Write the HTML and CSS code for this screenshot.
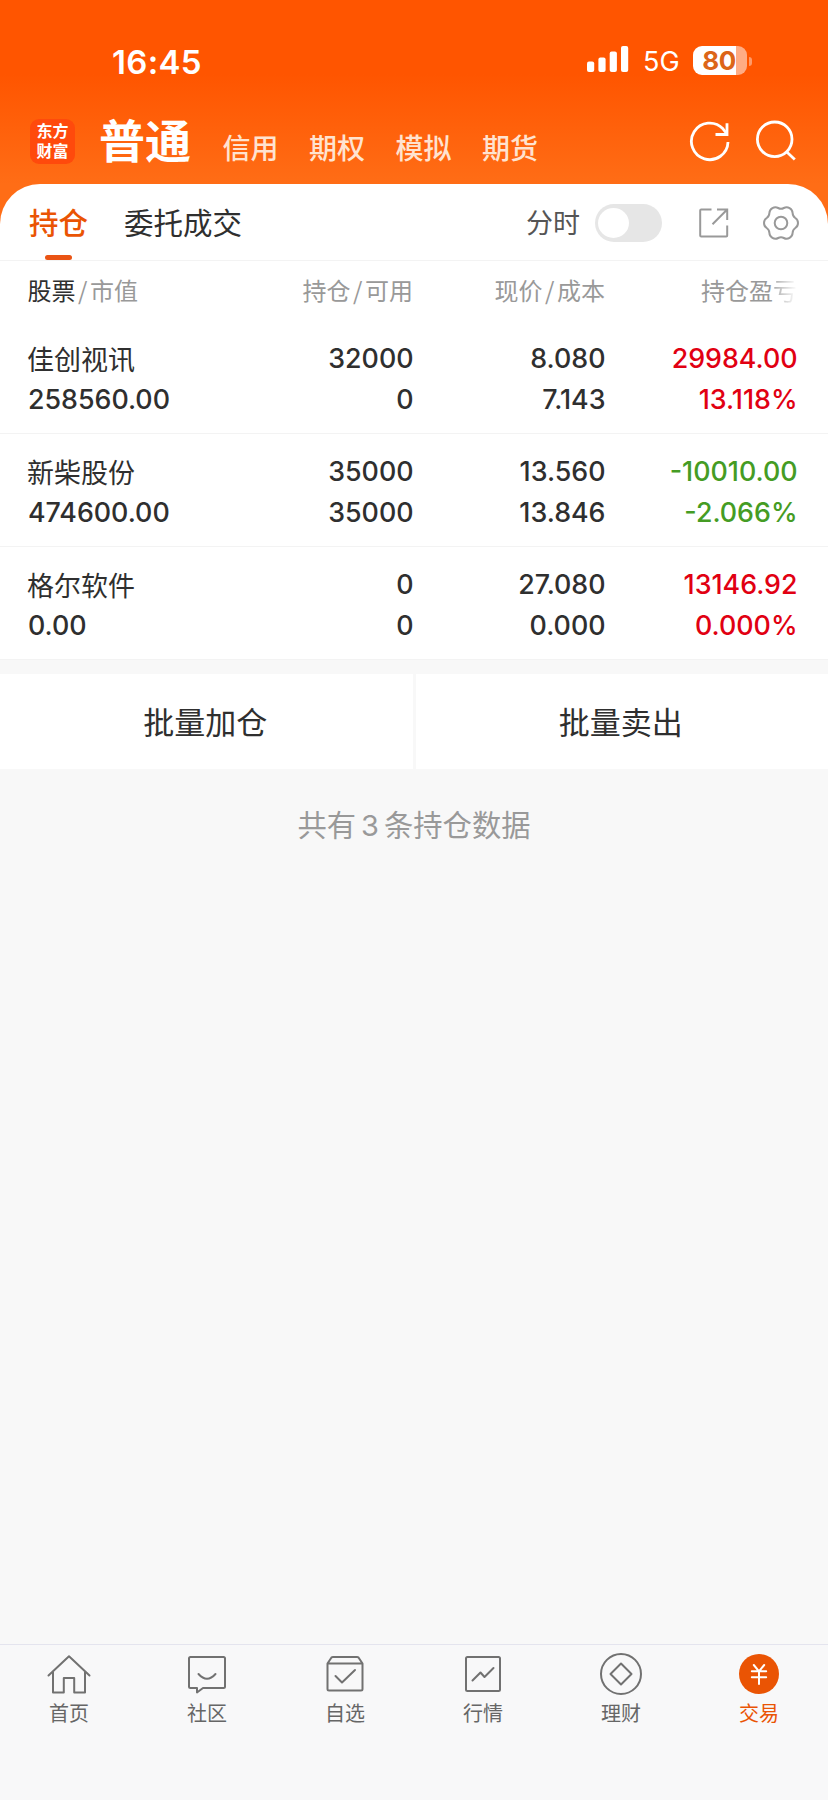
FILE: index.html
```html
<!DOCTYPE html>
<html lang="zh-CN">
<head>
<meta charset="utf-8">
<title>持仓</title>
<link rel="stylesheet" href="styles.css">
</head>
<body>
<div class="app">
  <header class="top">
    <div class="status">
      <span class="time">16:45</span>
      <svg class="signal" width="42" height="26" viewBox="0 0 42 26" fill="#fff"><rect x="0" y="15.5" width="7.2" height="10.5" rx="2"/><rect x="11.4" y="11.5" width="7.2" height="14.5" rx="2"/><rect x="22.7" y="5.5" width="7.2" height="20.5" rx="2"/><rect x="34" y="0" width="7.2" height="26" rx="2"/></svg>
      <span class="net">5G</span>
      <span class="battery"><span class="level">80</span></span><span class="nub"></span>
    </div>
    <div class="accounts">
      <div class="logo"><span>东方</span><span>财富</span></div>
      <span class="current">普通</span>
      <nav class="kinds"><a>信用</a><a>期权</a><a>模拟</a><a>期货</a></nav>
      <svg class="refresh" width="42" height="42" viewBox="0 0 42 42" fill="none" stroke="#fff" stroke-width="2.800"><path d="M40 22A18.300 18.300 0 1 1 35 8.800L39 14"/><path d="M39 3.200v11.300H27.500"/></svg>
      <svg class="search" width="42" height="42" viewBox="0 0 42 42" fill="none" stroke="#fff" stroke-width="2.800"><circle cx="20.700" cy="19.300" r="17.300"/><path d="M32 31.200l8.800 8.300"/></svg>
    </div>
  </header>
  <main class="card">
    <div class="tabs">
      <a class="tab active">持仓</a>
      <a class="tab">委托成交</a>
      <span class="minute">分时</span>
      <span class="toggle"></span>
      <svg class="export" width="30" height="30" viewBox="0 0 30 30" fill="none" stroke="#999" stroke-width="2"><path d="M12.500 1.500H2.200Q1.200 1.500 1.200 2.500v25Q1.200 28.500 2.200 28.500h25Q28.200 28.500 28.200 27.500V17.500M18 1.500h10.200V12M28.200 1.500L13.500 16.300"/></svg>
      <svg class="gear" width="36" height="36" viewBox="-18 -18 36 36" fill="none" stroke="#999" stroke-width="2"><path d="M17 0Q17 3.300 14.300 5Q11.700 6.750 11.600 10Q11.500 13.200 8.600 14.850Q5.700 16.500 2.850 15Q0 13.500-2.850 15Q-5.700 16.500-8.600 14.850Q-11.500 13.200-11.600 10Q-11.700 6.750-14.300 5Q-17 3.300-17 0Q-17-3.300-14.300-5Q-11.700-6.750-11.600-10Q-11.500-13.200-8.600-14.850Q-5.700-16.500-2.850-15Q0-13.500 2.850-15Q5.700-16.500 8.600-14.850Q11.500-13.200 11.600-10Q11.700-6.750 14.300-5Q17-3.300 17 0Z"/><circle r="6.300"/></svg>
    </div>
    <div class="grid head">
      <span><b>股票</b><i>/</i>市值</span><span>持仓<i>/</i>可用</span><span>现价<i>/</i>成本</span><span>持仓盈<em>亏</em></span>
    </div>
    <div class="grid row">
      <div><p class="name">佳创视讯</p><p>258560.00</p></div><div><p>32000</p><p>0</p></div><div><p>8.080</p><p>7.143</p></div><div class="up"><p>29984.00</p><p>13.118%</p></div>
    </div>
    <div class="grid row">
      <div><p class="name">新柴股份</p><p>474600.00</p></div><div><p>35000</p><p>35000</p></div><div><p>13.560</p><p>13.846</p></div><div class="down"><p>-10010.00</p><p>-2.066%</p></div>
    </div>
    <div class="grid row">
      <div><p class="name">格尔软件</p><p>0.00</p></div><div><p>0</p><p>0</p></div><div><p>27.080</p><p>0.000</p></div><div class="up"><p>13146.92</p><p>0.000%</p></div>
    </div>
  </main>
  <div class="batch"><a>批量加仓</a><a>批量卖出</a></div>
  <p class="summary">共有<span>3</span>条持仓数据</p>
  <nav class="bottom">
    <a><svg width="48" height="44" viewBox="0 0 48 44"><path d="M3.500 23.500L24 4.300L44.500 23.500M8 20v20.500h10.800V26h10.400v14.500H40V20"/></svg>首页</a>
    <a><svg width="48" height="44" viewBox="0 0 48 44"><path d="M7.500 5h33q1.500 0 1.500 1.500v28q0 1.500-1.500 1.500H20l-6 4.500V36H7.500Q6 36 6 34.500v-28Q6 5 7.500 5zM15.500 22q8.500 9.500 17 0"/></svg>社区</a>
    <a><svg width="48" height="44" viewBox="0 0 48 44"><path d="M6.500 11.500L10.500 5.500Q11 5 12 5h24q1 0 1.500.5l4 6v25.500q0 1.500-1.500 1.500H8q-1.500 0-1.500-1.500zM6.500 11.500h35M14.500 24l6.500 6.500L34 18"/></svg>自选</a>
    <a><svg width="48" height="44" viewBox="0 0 48 44"><rect x="7" y="5" width="34" height="34" rx="1.500"/><path d="M13.500 28.500l8-8 4 4.500 9-9"/></svg>行情</a>
    <a><svg width="48" height="44" viewBox="0 0 48 44"><circle cx="24" cy="22" r="20"/><path d="M24 11.500L34.500 22L24 32.500L13.500 22z"/></svg>理财</a>
    <a class="on"><svg width="48" height="44" viewBox="0 0 48 44"><circle class="disc" cx="24" cy="22" r="20"/><path class="yen" d="M18.800 13l5.200 6.300 5.200-6.300M24 19.300V32M16.800 19.300h14.400M16.800 25.300h14.400"/></svg>交易</a>
  </nav>
</div>
</body>
</html>
```
FILE: styles.css
```css
* { box-sizing: border-box; }
body { margin: 0; background: #f8f8f8; }
p { margin: 0; }
i, em { font-style: normal; }
.app {
  width: 828px; height: 1800px; display: flex; flex-direction: column;
  font-family: "Noto Sans CJK SC", "Noto Sans", sans-serif; color: #2f2f2f;
  background: #f8f8f8;
}
.top { height: 230px; flex: none; background: linear-gradient(#ff5500 0, #ff5500 74px, #ff6d16 184px, #ff6d16); color: #fff; }
.status { display: flex; height: 107px; padding: 0 76px 0 112px; font-family: Inter, sans-serif; }
.time { font-size: 33px; font-weight: 600; line-height: 38px; margin-top: 43px; letter-spacing: 0.3px; }
.signal { margin: 46px 14px 0 auto; }
.net { font-size: 27px; font-weight: 400; line-height: 32px; margin-top: 46px; width: 50px; }
.battery {
  width: 54px; height: 29px; margin-top: 46px; border-radius: 9px; overflow: hidden;
  background: linear-gradient(90deg, #fff 43px, #ffac84 43px);
}
.level { display: block; padding-right: 2px; text-align: center; font-size: 26px; font-weight: 700; line-height: 29px; color: #dc6518; letter-spacing: -0.5px; }
.nub { width: 3px; height: 9px; margin: 57px 0 0 2px; border-radius: 0 4px 4px 0; background: #ff9a69; }
.accounts { display: flex; height: 77px; padding: 0 32px 0 30px; }
.logo {
  display: flex; flex-direction: column; align-items: center; gap: 3px;
  width: 45px; height: 45px; margin-top: 12px; padding: 3px 0; border-radius: 9px; background: #ff4a0c;
  font-size: 16px; font-weight: 700; line-height: 17px;
}
.current { margin: 1px 0 0 24px; font-size: 46px; line-height: 60px; font-weight: 700; }
.kinds { display: flex; gap: 30.500px; margin: 20px 0 0 31.500px; font-size: 28px; line-height: 40px; font-weight: 500; color: #ffe3d0; }
.refresh { margin: 13px 0 0 auto; }
.search { margin: 13px 0 0 24px; }
.card { margin-top: -46px; flex: none; background: #fff; border-radius: 40px 40px 0 0; }
.tabs { display: flex; height: 77px; padding: 0 28px 0 29px; border-bottom: 1px solid #f3f3f3; }
.tab { font-size: 29.500px; line-height: 75px; margin-right: 36px; }
.tab.active { position: relative; color: #ea5404; font-weight: 500; }
.tab.active::after { content: ""; position: absolute; left: 16px; top: 71px; width: 27px; height: 5px; border-radius: 3px; background: #ea5414; }
.minute { margin-left: auto; font-size: 27px; line-height: 76px; color: #555; }
.toggle { width: 67px; height: 38px; margin: 20px 37px 0 15px; border-radius: 19px; background: #e6e6e6; padding: 4px 3px; }
.toggle::before { content: ""; display: block; width: 31px; height: 30px; border-radius: 50%; background: #fff; }
.export { margin: 24px 34px 0 0; }
.gear { margin: 21px 1px 0 0; }
.grid { display: grid; grid-template-columns: 189.500px 196px 192px 192px; padding-left: 28px; text-align: right; }
.grid > :first-child { text-align: left; }
.head { height: 60px; font-size: 24px; line-height: 57px; color: #999; padding-left: 27.500px; }
.head b { font-weight: 400; color: #2f2f2f; }
.head i { display: inline-block; width: 14.500px; text-align: center; }
.head em { color: transparent; background: linear-gradient(90deg, #aaa, #fff); background-clip: text; -webkit-background-clip: text; }
.row { height: 113px; padding-top: 17px; border-bottom: 1px solid #f3f3f3; font-family: Inter, sans-serif; font-size: 26.800px; line-height: 41px; font-weight: 550; }
.name { margin-left: -1px; font-family: "Noto Sans CJK SC", sans-serif; font-size: 27px; font-weight: 400; }
.up { color: #e10012; }
.down { color: #459c24; }
.batch { display: flex; gap: 3px; margin-top: 14px; height: 95px; flex: none; }
.batch a { flex: 1; padding-right: 2px; background: #fff; text-align: center; font-size: 31px; line-height: 94px; }
.summary { margin-top: 35px; text-align: center; font-size: 29.300px; line-height: 39px; color: #999; }
.summary span { font-family: Inter, sans-serif; font-size: 29px; padding: 0 5px; }
.bottom { display: flex; height: 156px; margin-top: auto; border-top: 1px solid #e4e4ee; background: #f8f8f9; }
.bottom a { flex: 1; display: flex; flex-direction: column; align-items: center; padding-top: 7px; font-size: 20px; line-height: 34px; color: #666; }
.bottom svg { fill: none; stroke: #717171; stroke-width: 2; stroke-linejoin: round; stroke-linecap: round; }
.bottom .on { color: #ea5404; }
.bottom .disc { fill: #ea5404; stroke: none; }
.bottom .yen { stroke: #fff; }
```
